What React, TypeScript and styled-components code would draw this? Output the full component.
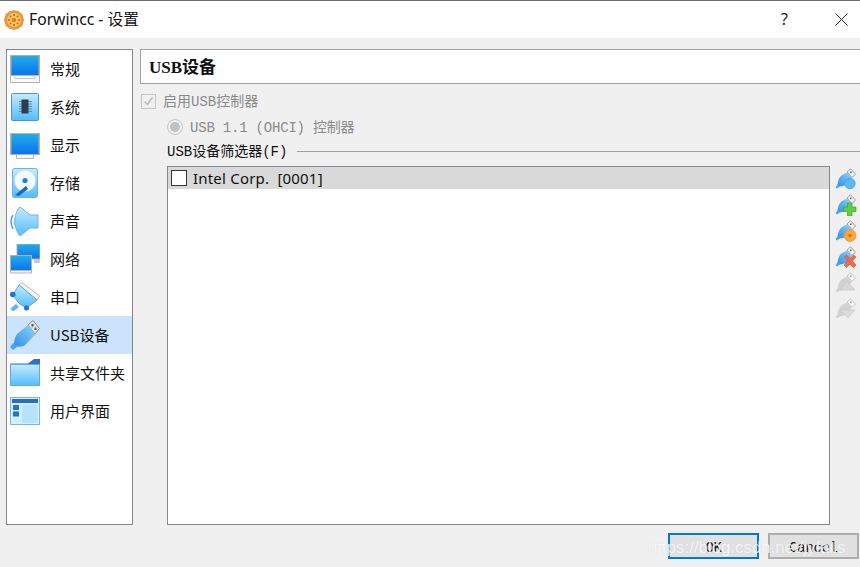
import React from "react";
import styled, { createGlobalStyle } from "styled-components";

const Global = createGlobalStyle`
  html, body { margin: 0; padding: 0; background: #f0f0f0; }
  #root { width: 860px; height: 567px; overflow: hidden; }
`;

const CJK = `"Noto Sans CJK SC", sans-serif`;
const MONO = `"Liberation Mono", "Noto Sans CJK SC", monospace`;

const Window = styled.div`
  position: relative;
  width: 860px;
  height: 567px;
  display: flex;
  flex-direction: column;
  background: #f0f0f0;
  overflow: hidden;
`;

const TitleBar = styled.header`
  height: 37px;
  flex: none;
  display: flex;
  align-items: center;
  background: #fff;
  border-top: 1px solid #6e6e6e;
  padding: 0 12px 0 4px;
`;

const TitleText = styled.span`
  margin: 0 0 2px 5px;
  font: 15.7px "Noto Sans", ${CJK};
  color: #111;
  flex: 1;
`;

const HelpMark = styled.span`
  font: 16px "Noto Sans", sans-serif;
  color: #222;
  margin: 0 47px 2px 0;
`;

const Body = styled.main`
  flex: none;
  display: flex;
  gap: 7px;
  height: 476px;
  margin-top: 11px;
  margin-left: 6px;
`;

const Sidebar = styled.nav`
  width: 127px;
  box-sizing: border-box;
  background: #fff;
  border: 1px solid #828790;
  display: flex;
  flex-direction: column;
`;

const NavRow = styled.div<{ $active?: boolean }>`
  height: 38px;
  flex: none;
  display: flex;
  align-items: center;
  gap: 10px;
  padding-left: 3px;
  background: ${(p) => (p.$active ? "#cce4fb" : "transparent")};
  font: 15px ${CJK};
  color: #111;
`;

const NavLabel = styled.span`
  margin-bottom: 2px;
`;

const Main = styled.section`
  width: 720px;
  display: flex;
  flex-direction: column;
`;

const PageTitle = styled.h1`
  margin: 0;
  height: 35px;
  box-sizing: border-box;
  flex: none;
  background: #fff;
  border: 1px solid #a0a0a0;
  border-right: none;
  display: flex;
  align-items: center;
  padding: 0 0 2px 8px;
  font: bold 17px "Liberation Serif", ${CJK};
  color: #111;
`;

const CheckRow = styled.div`
  height: 20px;
  flex: none;
  margin-top: 7px;
  display: flex;
  align-items: center;
  gap: 7px;
  padding-left: 1px;
  font: 14px ${MONO};
  color: #8a8a8a;
`;

const RowLabel = styled.span`
  margin-bottom: 2px;
`;

const DisabledBox = styled.span`
  width: 13px;
  height: 13px;
  border: 1px solid #c4c4c4;
  background: #f0f0f0;
  display: flex;
  align-items: center;
  justify-content: center;
`;

const RadioRow = styled.div`
  height: 20px;
  flex: none;
  margin-top: 6px;
  display: flex;
  align-items: center;
  gap: 7px;
  padding-left: 27px;
  font: 14px ${MONO};
  letter-spacing: -0.2px;
  color: #8a8a8a;
`;

const Radio = styled.span`
  width: 14px;
  height: 14px;
  border: 1px solid #c4c4c4;
  border-radius: 50%;
  background: #f0f0f0;
  display: flex;
  align-items: center;
  justify-content: center;
  &::after {
    content: "";
    width: 10px;
    height: 10px;
    border-radius: 50%;
    background: #c2c2c2;
  }
`;

const GroupHead = styled.div`
  height: 20px;
  flex: none;
  margin-top: 4px;
  padding-left: 27px;
  display: flex;
  align-items: center;
  gap: 10px;
  font: 14px ${MONO};
  color: #111;
  &::after {
    content: "";
    flex: 1;
    height: 1px;
    background: #a0a0a0;
  }
`;

const ListArea = styled.div`
  flex: 1;
  min-height: 0;
  margin-top: 5px;
  padding-left: 27px;
  display: flex;
`;

const List = styled.div`
  width: 663px;
  box-sizing: border-box;
  background: #fff;
  border: 1px solid #828790;
`;

const ListRow = styled.div`
  height: 22px;
  background: #d9d9d9;
  display: flex;
  align-items: center;
  gap: 6px;
  padding-left: 3px;
  font: 15px "Noto Sans", sans-serif;
  letter-spacing: 0.2px;
  white-space: pre;
  color: #111;
`;

const RowCheck = styled.span`
  width: 14px;
  height: 14px;
  background: #fff;
  border: 1px solid #333;
`;

const ToolColumn = styled.div`
  width: 30px;
  flex: none;
  display: flex;
  flex-direction: column;
  align-items: flex-end;
  padding-right: 2px;
  box-sizing: border-box;
`;

const ToolButton = styled.div`
  width: 24px;
  height: 26px;
  flex: none;
  display: flex;
  align-items: center;
  justify-content: center;
`;

const Footer = styled.footer`
  flex: 1;
  display: flex;
  justify-content: flex-end;
  gap: 9px;
  padding: 8px 1px 0 0;
`;

const DialogButton = styled.button<{ $primary?: boolean }>`
  width: 91px;
  height: 26px;
  box-sizing: border-box;
  padding: 3px 0 0 0;
  background: #e1e1e1;
  border: ${(p) => (p.$primary ? "2px solid #0078d7" : "2px solid #adadad")};
  font: 14px "Liberation Mono", monospace;
  letter-spacing: -0.3px;
  color: #111;
`;

const Watermark = styled.div`
  position: absolute;
  left: 648px;
  top: 538px;
  font: 16.6px "Liberation Sans", sans-serif;
  letter-spacing: 0.1px;
  color: rgba(255, 255, 255, 0.78);
  text-shadow: 0 0 1px rgba(190, 190, 190, 0.5);
  white-space: nowrap;
`;

const Defs = () => (
  <defs>
    <linearGradient id="scr" x1="0" y1="0" x2="0" y2="1">
      <stop offset="0" stopColor="#22ace8" />
      <stop offset="1" stopColor="#0a74f0" />
    </linearGradient>
    <linearGradient id="lite" x1="0" y1="0" x2="0" y2="1">
      <stop offset="0" stopColor="#c4ecff" />
      <stop offset="1" stopColor="#52bdfb" />
    </linearGradient>
    <linearGradient id="usb" x1="1" y1="0" x2="0" y2="1">
      <stop offset="0" stopColor="#8fd6fb" />
      <stop offset="1" stopColor="#2f8fe8" />
    </linearGradient>
  </defs>
);

const Ic = styled.svg`
  flex: none;
  display: block;
`;

const Icon30 = ({ children }: { children: React.ReactNode }) => (
  <Ic width="30" height="30" viewBox="0 0 30 30">
    <Defs />
    {children}
  </Ic>
);

const IconGeneral = () => (
  <Icon30>
    <path d="M0 21.5V1h30v20.5z" fill="#b0b0b0" />
    <rect x="1.5" y="2" width="27" height="19" fill="url(#scr)" />
    <path d="M.5 21.5h29v7H.5z" fill="#f8f8f8" stroke="#b5b5b5" />
    <path d="M5 21.5v3h20v-3" fill="none" stroke="#c8c8c8" />
  </Icon30>
);

const IconSystem = () => (
  <Icon30>
    <rect x="1.5" y="1.5" width="27" height="27" rx="1" fill="url(#lite)" stroke="#4c93dc" />
    <path d="M9 9.5h13M9 12h13M9 14.5h13M9 17h13M9 19.5h13" stroke="#3a7fb0" strokeWidth=".8" />
    <rect x="11.5" y="7.5" width="7" height="14" fill="#323c4c" />
  </Icon30>
);

const IconDisplay = () => (
  <Icon30>
    <rect x="0" y="3" width="30" height="22" fill="#b2b2b2" />
    <rect x="1.5" y="4" width="27" height="20" fill="url(#scr)" />
    <path d="M6.5 25v3.5h17V25" fill="#f6f6f6" stroke="#b5b5b5" />
  </Icon30>
);

const IconStorage = () => (
  <Icon30>
    <rect x="2.5" y=".5" width="25" height="29" rx="2" fill="url(#lite)" stroke="#74aee6" />
    <circle cx="15" cy="13" r="10.5" fill="#f4fbff" />
    <circle cx="15" cy="12.5" r="2.6" fill="#1f7fe0" />
    <path d="M5 27l11-9 2 3-9 7z" fill="#1d66c4" />
  </Icon30>
);

const IconSound = () => (
  <Icon30>
    <path d="M10 1 L20 9 H28 V22 H20 L10 30 C6 25 5 20 5 15.5 C5 10 6 5 10 1z" fill="url(#lite)" stroke="#77aeea" />
    <path d="M3 9 C.5 13 .5 18 3 23" fill="none" stroke="#4d9ce8" strokeWidth="1.5" />
    <path d="M5 12 C4 14 4 17 5 19.500" fill="none" stroke="#8cc4f2" strokeWidth="1.2" />
  </Icon30>
);

const IconNetwork = () => (
  <Icon30>
    <rect x="7" y="0" width="23" height="16" fill="#fff" />
    <rect x="7" y="0" width="23" height="15" fill="url(#scr)" stroke="#b0b0b0" />
    <path d="M24 15v4h6v-4z" fill="#c8c8c8" />
    <rect x="0.5" y="11.500" width="21" height="15" fill="url(#scr)" stroke="#b0b0b0" />
    <path d="M.5 26.500h21V29H.5z" fill="#f4f4f4" stroke="#b5b5b5" />
  </Icon30>
);

const IconSerial = () => (
  <Icon30>
    <path d="M12 .5 L29.500 14 L27 18 L9 3z" fill="#f6f6f6" stroke="#b5b5b5" />
    <path d="M9 3 L27 18 L18 25 C12 26 5 18 3.500 12z" fill="url(#lite)" stroke="#62a4e6" />
    <circle cx="2.800" cy="12.500" r="2.800" fill="#1e74d8" />
    <circle cx="16.500" cy="26" r="2.500" fill="#1e74d8" />
    <path d="M6 22 L9 25 L3 29.500 L.5 26.500z" fill="#5fb6f3" />
  </Icon30>
);

const IconUsb = () => (
  <Icon30>
    <path d="M18 5 L23 .5 L29.500 8.500 L25 14z" fill="#dfe3e6" stroke="#8a8a8a" />
    <rect x="21.500" y="4" width="2" height="2.500" fill="#555" />
    <rect x="24.500" y="7.500" width="2" height="2.500" fill="#555" />
    <path d="M18 5 L25.500 14.500 L14 26 C10 27 6 27 3.500 26 C4 21 5 17 7 14z" fill="url(#usb)" />
    <path d="M3 23 L7 27 L3 30 L0 27z" fill="#4aa6ee" />
  </Icon30>
);

const IconFolder = () => (
  <Icon30>
    <path d="M0 5.500 L18 5.500 L24 1 H30 V8 H0z" fill="#2f71c9" />
    <rect x=".5" y="6.500" width="29" height="21" fill="url(#lite)" stroke="#64a8ec" />
  </Icon30>
);

const IconInterface = () => (
  <Icon30>
    <rect x=".5" y="1.500" width="29" height="27" fill="#d4f0ff" stroke="#7db4e6" />
    <rect x="2" y="3" width="26" height="4" fill="#2d6cbe" />
    <rect x="3" y="9" width="6" height="5" fill="#1d74d4" />
    <rect x="3" y="15.500" width="6" height="5" fill="#1d74d4" />
    <rect x="12" y="9" width="15.500" height="18" fill="#b4e4fc" />
  </Icon30>
);

const CogLogo = () => (
  <Ic width="20" height="20" viewBox="0 0 20 20">
    <circle cx="10" cy="10" r="9.700" fill="#e59a45" />
    <path d="M10 0l2 2 2.800-1 .9 2.400 2.900.3-.3 2.900L20 10l-1.700 3.400.3 2.900-2.900.3-.9 2.400-2.800-1-2 2-2-2-2.800 1-.9-2.400-2.900-.3.3-2.900L0 10l1.700-3.400-.3-2.900 2.900-.3.9-2.400 2.800 1z" fill="#e8983c" />
    <circle cx="10" cy="10" r="7" fill="#fbc668" />
    <circle cx="10" cy="10" r="2.200" fill="#e87a22" />
    <circle cx="10" cy="5" r="1.100" fill="#d4601c" />
    <circle cx="10" cy="15" r="1.100" fill="#d4601c" />
    <circle cx="5" cy="10" r="1.100" fill="#d4601c" />
    <circle cx="15" cy="10" r="1.100" fill="#d4601c" />
    <circle cx="6.500" cy="6.500" r="1" fill="#d4601c" />
    <circle cx="13.500" cy="6.500" r="1" fill="#d4601c" />
    <circle cx="6.500" cy="13.500" r="1" fill="#d4601c" />
    <circle cx="13.500" cy="13.500" r="1" fill="#d4601c" />
  </Ic>
);

const SmallUsb = ({ gray, children }: { gray?: boolean; children?: React.ReactNode }) => (
  <Ic width="22" height="22" viewBox="0 0 22 22">
    <Defs />
    <path d="M12 4 L15.500 .8 L20.500 6 L17 9.500z" fill={gray ? "#f4f4f4" : "#f0f0f0"} stroke={gray ? "#bdbdbd" : "#8a8a8a"} strokeWidth=".8" />
    <rect x="15" y="3.500" width="1.600" height="1.600" fill={gray ? "#a8a8a8" : "#666"} />
    <path d="M12 4.500 L17 9.500 L12 16 C9 18.500 5 18.500 2.500 18 C2.500 14 4 9 7 7z" fill={gray ? "#d2d2d2" : "url(#usb)"} />
    <path d="M3 16 L5 18.500 L2 20.500 L.5 19z" fill={gray ? "#d2d2d2" : "#4aa6ee"} />
    {children}
  </Ic>
);

const navItems: [string, React.ComponentType][] = [
  ["常规", IconGeneral],
  ["系统", IconSystem],
  ["显示", IconDisplay],
  ["存储", IconStorage],
  ["声音", IconSound],
  ["网络", IconNetwork],
  ["串口", IconSerial],
  ["USB设备", IconUsb],
  ["共享文件夹", IconFolder],
  ["用户界面", IconInterface],
];

export default function App() {
  return (
    <Window>
      <Global />
      <TitleBar>
        <CogLogo />
        <TitleText>Forwincc - 设置</TitleText>
        <HelpMark>?</HelpMark>
        <Ic width="13" height="13" viewBox="0 0 13 13">
          <path d="M.5.500l12 12M12.500.500l-12 12" stroke="#222" strokeWidth="1" />
        </Ic>
      </TitleBar>
      <Body>
        <Sidebar>
          {navItems.map(([label, Icon]) => (
            <NavRow key={label} $active={label === "USB设备"}>
              <Icon />
              <NavLabel>{label}</NavLabel>
            </NavRow>
          ))}
        </Sidebar>
        <Main>
          <PageTitle>USB设备</PageTitle>
          <CheckRow>
            <DisabledBox>
              <Ic width="11" height="11" viewBox="0 0 11 11">
                <path d="M1.500 5.500l3 3 5-7" fill="none" stroke="#b8b8b8" strokeWidth="1.400" />
              </Ic>
            </DisabledBox>
            <RowLabel>启用USB控制器</RowLabel>
          </CheckRow>
          <RadioRow>
            <Radio />
            <RowLabel>USB 1.1 (OHCI) 控制器</RowLabel>
          </RadioRow>
          <GroupHead>
            <RowLabel>USB设备筛选器(F)</RowLabel>
          </GroupHead>
          <ListArea>
            <List>
              <ListRow>
                <RowCheck />
                <span>Intel Corp.  [0001]</span>
              </ListRow>
            </List>
            <ToolColumn>
              <ToolButton>
                <SmallUsb>
                  <circle cx="15" cy="15.500" r="5.200" fill="#5cb8f5" stroke="#3b8fdc" strokeWidth=".6" />
                </SmallUsb>
              </ToolButton>
              <ToolButton>
                <SmallUsb>
                  <path d="M12.500 9h4.500v4h4v4.500h-4v4.500h-4.500v-4.500h-4v-4.500h4z" fill="#5fce3c" stroke="#3a9a22" strokeWidth=".6" />
                </SmallUsb>
              </ToolButton>
              <ToolButton>
                <SmallUsb>
                  <circle cx="15" cy="15.500" r="6" fill="#f5a93a" stroke="#e88a20" strokeWidth=".6" />
                  <circle cx="15" cy="15.500" r="1.800" fill="#e0701c" />
                </SmallUsb>
              </ToolButton>
              <ToolButton>
                <SmallUsb>
                  <path d="M9.500 10.500l2-1.500 3.500 3.500L18.500 9l2.500 2-3.500 4 3.500 4-2.500 2.500-3.500-3.500-3.500 3.500-2.500-2.500 3.500-4z" fill="#ee6a4a" stroke="#c8472c" strokeWidth=".6" />
                </SmallUsb>
              </ToolButton>
              <ToolButton>
                <SmallUsb gray>
                  <path d="M12 9l8 9H5z" fill="#d8d8d8" stroke="#c4c4c4" strokeWidth=".6" />
                </SmallUsb>
              </ToolButton>
              <ToolButton>
                <SmallUsb gray>
                  <path d="M5 12h15l-7 8z" fill="#dcdcdc" stroke="#c4c4c4" strokeWidth=".6" />
                </SmallUsb>
              </ToolButton>
            </ToolColumn>
          </ListArea>
        </Main>
      </Body>
      <Footer>
        <DialogButton $primary>OK</DialogButton>
        <DialogButton>Cancel</DialogButton>
      </Footer>
      <Watermark>https://blog.csdn.net/jyfails</Watermark>
    </Window>
  );
}
